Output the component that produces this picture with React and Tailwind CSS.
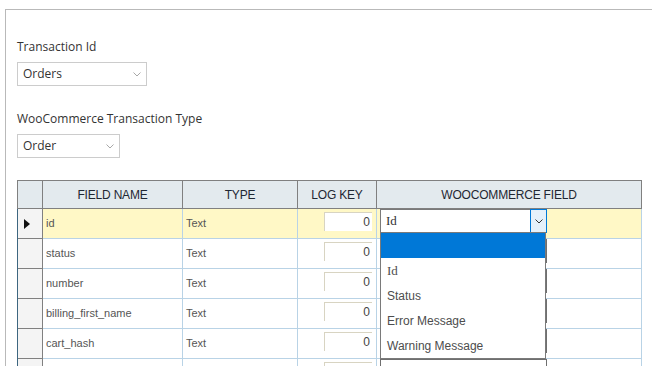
import React from 'react';

const rows = [
  { name: 'id', type: 'Text', key: '0', active: true },
  { name: 'status', type: 'Text', key: '0' },
  { name: 'number', type: 'Text', key: '0' },
  { name: 'billing_first_name', type: 'Text', key: '0' },
  { name: 'cart_hash', type: 'Text', key: '0' },
  { name: '', type: '', key: '' },
];

const options = ['', 'Id', 'Status', 'Error Message', 'Warning Message'];

const Chevron = ({ className }) => (
  <svg width="8" height="5" viewBox="0 0 8 5" className={className}>
    <path d="M0.5 0.5L4 4L7.5 0.5" fill="none" stroke="currentColor" strokeWidth="1" />
  </svg>
);

const SelectBox = ({ value, className }) => (
  <div className={`flex items-center justify-between h-[24px] border border-[#cccccc] bg-white pl-[5px] pr-[5px] ${className}`}>
    <span className="text-[12px] text-[#333333]">{value}</span>
    <Chevron className="text-[#a8a8a8]" />
  </div>
);

// Combo de la columna WooCommerce; la fila activa muestra la lista abierta
const FieldCombo = ({ open }) => {
  if (!open) {
    return <div className="w-[167px] h-[24px] border border-[#6f6f6f] bg-white" />;
  }
  return (
    <div className="relative flex w-[167px] h-[24px]">
      <div className="flex-1 flex items-center pl-[5px] border-l border-t border-b border-[#7a7a7a] bg-white font-['Liberation_Serif',serif] text-[13px] text-[#333333]">
        Id
      </div>
      <div className="w-[17px] h-full flex items-center justify-center border border-[#0078d7] bg-[#e5f1fb]">
        <Chevron className="text-[#333333]" />
      </div>
      <div className="absolute left-0 top-[23px] z-10 w-[166px] border border-[#7a7a7a] bg-white">
        {options.map((opt, i) => (
          <div
            key={i}
            className={`h-[25px] flex items-center pl-[6px] text-[12px] text-[#4d4d4d] ${i === 0 ? 'bg-[#0078d7]' : ''} ${opt === 'Id' ? "font-['Liberation_Serif',serif] text-[13px]" : ''}`}
          >
            {opt}
          </div>
        ))}
      </div>
    </div>
  );
};

export default function App() {
  return (
    <div className="w-[652px] h-[366px] overflow-hidden bg-white font-['Open_Sans',sans-serif]">
      <div className="ml-[5px] mt-[9px] h-[357px] border-t border-l border-[#b9b9b9] pl-[11px] pt-[28px]">
        <div className="text-[12px] leading-[18px] text-[#333333]">Transaction Id</div>
        <SelectBox value="Orders" className="mt-[6px] w-[130px]" />

        <div className="mt-[24px] text-[12px] leading-[18px] text-[#333333]">WooCommerce Transaction Type</div>
        <SelectBox value="Order" className="mt-[6px] w-[103px]" />

        {/* Grilla de campos */}
        <div className="mt-[22px] w-[625px] font-['Liberation_Sans',Arial,sans-serif] text-[11px]">
          <div className="flex h-[29px] border-t border-b border-l border-[#808080] bg-[#e3eaee] text-[12px] tracking-[-0.2px] text-[#1f2733]">
            <div className="w-[25px] border-r border-[#808080]" />
            <div className="w-[140px] flex items-center justify-center border-r border-[#808080]">FIELD NAME</div>
            <div className="w-[115px] flex items-center justify-center border-r border-[#808080]">TYPE</div>
            <div className="w-[79px] flex items-center justify-center border-r border-[#808080]">LOG KEY</div>
            <div className="w-[265px] flex items-center justify-center border-r border-[#808080]">WOOCOMMERCE FIELD</div>
          </div>

          {rows.map((row, idx) => {
            const bg = row.active ? 'bg-[#fff8c6]' : 'bg-white';
            return (
              <div key={idx} className="flex h-[30px] border-l border-[#3d6680]">
                <div className="w-[25px] flex items-center pl-[6px] bg-[#f4f4f4] border-r border-b border-[#808080]">
                  {row.active && (
                    <svg width="6" height="10" viewBox="0 0 6 10">
                      <path d="M0 0L6 5L0 10Z" fill="#111111" />
                    </svg>
                  )}
                </div>
                <div className={`w-[140px] flex items-center pl-[3px] border-r border-b border-[#b9d3e6] text-[#555555] ${bg}`}>
                  {row.name}
                </div>
                <div className={`w-[115px] flex items-center pl-[3px] border-r border-b border-[#b9d3e6] text-[#555555] ${bg}`}>
                  {row.type}
                </div>
                <div className={`w-[79px] flex justify-end items-start pt-[3px] pr-[4px] border-r border-b border-[#b9d3e6] ${bg}`}>
                  <div className="w-[48px] h-[19px] border-t border-l border-[#d8d4c2] bg-white text-right pr-[2px] leading-[18px] text-[12px] text-[#444444]">
                    {row.key}
                  </div>
                </div>
                <div className={`relative w-[265px] pl-[3px] border-r border-b border-[#b9d3e6] ${bg}`}>
                  <FieldCombo open={row.active} />
                </div>
              </div>
            );
          })}
        </div>
      </div>
    </div>
  );
}
